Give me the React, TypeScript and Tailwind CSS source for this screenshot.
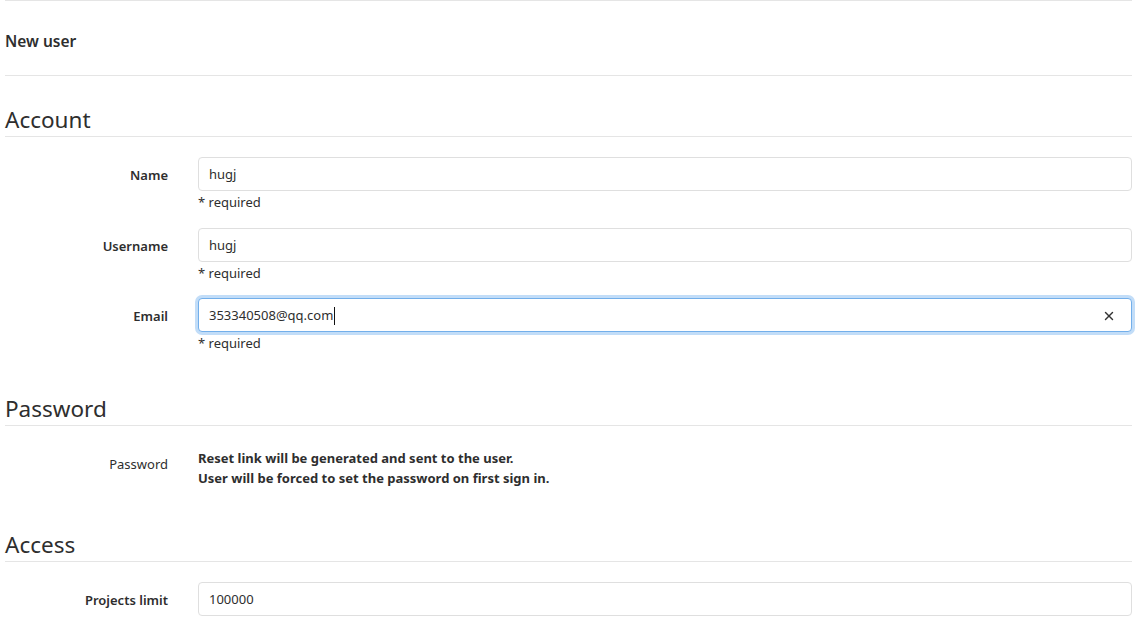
import { X } from 'lucide-react'

const font = { fontFamily: '"Noto Sans", "Open Sans", sans-serif' }

function SectionTitle({ children, className }: { children: string; className?: string }) {
  return (
    <h3 className={`h-[32px] border-b border-[#e5e5e5] text-[22.5px] leading-[30px] font-normal text-[#2e2e2e] ${className ?? ''}`}>
      {children}
    </h3>
  )
}

function Field({
  label,
  value,
  focused,
  required,
  className,
}: {
  label: string
  value: string
  focused?: boolean
  required?: boolean
  className?: string
}) {
  return (
    <div className={`grid grid-cols-[163px_1fr] gap-x-[30px] ${className ?? ''}`}>
      <label className="h-[34px] pt-[3px] flex items-center justify-end text-[13px] font-semibold text-[#2e2e2e]">{label}</label>
      <div>
        <div
          className={`relative h-[34px] flex items-center rounded-[4px] border bg-white px-[10px] pt-[2px] text-[13px] text-[#2e2e2e] ${
            focused ? 'border-[#73afea] shadow-[0_0_0_3px_#c2ddf8]' : 'border-[#dfdfdf]'
          }`}
        >
          <span>{value}</span>
          {focused && <span className="ml-px h-[18px] w-px bg-[#111]" />}
          {focused && <X size={14} strokeWidth={2.5} className="absolute right-[15px] text-[#333]" />}
        </div>
        {required && <p className="mt-[2px] text-[13px] leading-[18px] text-[#2e2e2e]">* required</p>}
      </div>
    </div>
  )
}

export default function App() {
  return (
    <div className="min-h-screen bg-white pl-[5px] pr-[16px]" style={font}>
      {/* Page header */}
      <div className="h-[76px] border-y border-[#e5e5e5] flex items-center pt-[7px]">
        <h1 className="text-[15.5px] font-semibold text-[#2e2e2e]">New user</h1>
      </div>

      {/* Account */}
      <SectionTitle className="mt-[29px]">Account</SectionTitle>
      <Field className="mt-[20px]" label="Name" value="hugj" required />
      <Field className="mt-[17px]" label="Username" value="hugj" required />
      <Field className="mt-[16px]" label="Email" value="353340508@qq.com" focused required />

      {/* Password */}
      <SectionTitle className="mt-[42px]">Password</SectionTitle>
      <div className="mt-[22px] grid grid-cols-[163px_1fr] gap-x-[30px] text-[13px] leading-[20px] text-[#2e2e2e]">
        <label className="pt-[6px] text-right">Password</label>
        <div className="font-bold">
          <p>Reset link will be generated and sent to the user.</p>
          <p>User will be forced to set the password on first sign in.</p>
        </div>
      </div>

      {/* Access */}
      <SectionTitle className="mt-[42px]">Access</SectionTitle>
      <Field className="mt-[20px]" label="Projects limit" value="100000" />
    </div>
  )
}
